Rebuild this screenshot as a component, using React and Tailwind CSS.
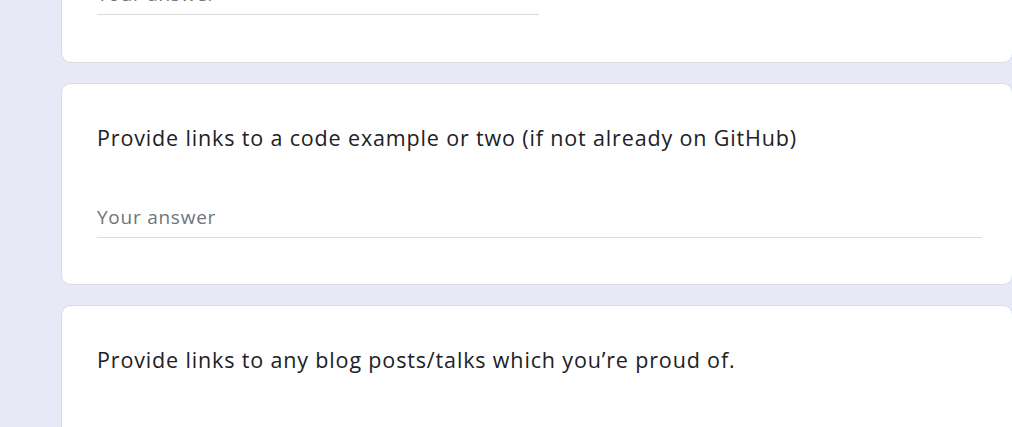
export default function App() {
  return (
    <div className="h-[427px] overflow-hidden bg-[#e8e9f6] pl-[61px] font-['Open_Sans',sans-serif]">
      {/* previous question, scrolled mostly off the top */}
      <div className="mt-[-19px] w-[952px] rounded-[10px] border border-[#dadce0] bg-white pl-[35px] pb-[47px]">
        <div className="w-[442px] border-b border-[#dadce0] pb-2 text-[19px] leading-6 tracking-[0.75px] text-[#70757a]">
          Your answer
        </div>
      </div>

      <div className="mt-5 w-[952px] rounded-[10px] border border-[#dadce0] bg-white pl-[35px] pt-10 pb-[46px]">
        <h3 className="text-[21.5px] leading-7 tracking-[0.85px] text-[#202124]">
          Provide links to a code example or two (if not already on GitHub)
        </h3>
        <div className="mt-[53px] w-[885px] border-b border-[#dadce0] pb-2 text-[19px] leading-6 tracking-[0.75px] text-[#70757a]">
          Your answer
        </div>
      </div>

      <div className="mt-5 w-[952px] rounded-[10px] border border-[#dadce0] bg-white pl-[35px] pt-10 pb-[46px]">
        <h3 className="text-[21.5px] leading-7 tracking-[0.85px] text-[#202124]">
          Provide links to any blog posts/talks which you’re proud of.
        </h3>
        <div className="mt-[53px] w-[885px] border-b border-[#dadce0] pb-2 text-[19px] leading-6 tracking-[0.75px] text-[#70757a]">
          Your answer
        </div>
      </div>
    </div>
  );
}
